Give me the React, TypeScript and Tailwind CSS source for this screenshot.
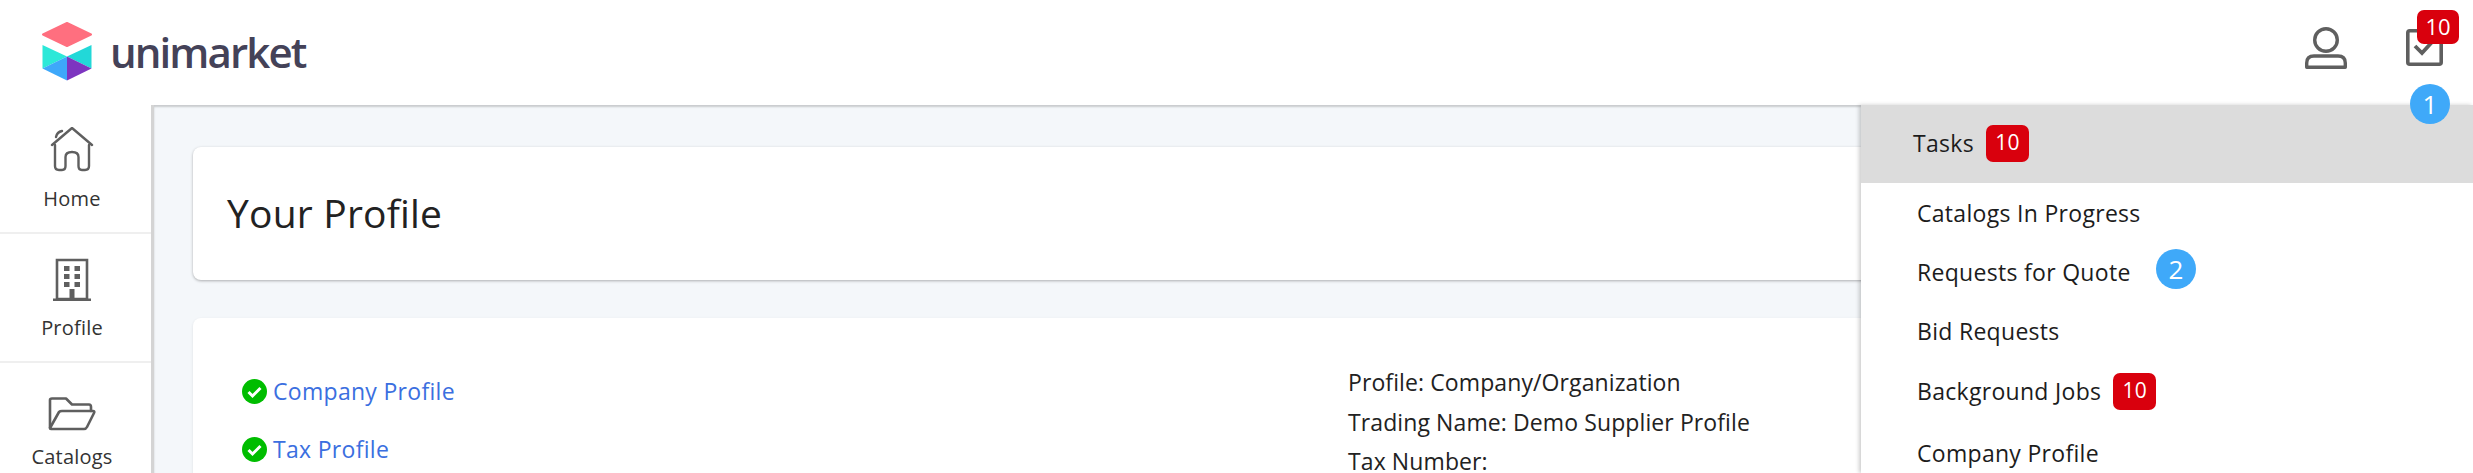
import React from 'react';

const font = { fontFamily: '"Open Sans", "Lato", sans-serif' };

const Logo = () => (
  <div className="flex items-center">
    <svg width="50" height="60" viewBox="0 0 50 60" className="ml-[42px] mt-[-1px]">
      <polygon points="25,1 49,12.5 25,24 1,12.5" fill="#ff6f7f" stroke="#ff6f7f" strokeWidth="2" strokeLinejoin="round" />
      <polygon points="0.5,23 25,34.5 0.5,46.5" fill="#2ce8d8" />
      <polygon points="49.5,23 25,34.5 49.5,46.5" fill="#22d8d8" />
      <polygon points="25,34.5 0.5,46.5 25,58.5" fill="#3ea8fa" />
      <polygon points="25,34.5 49.5,46.5 25,58.5" fill="#7d35c0" />
    </svg>
    <span className="ml-[18px] mt-[-2px] text-[42px] font-semibold leading-none tracking-[-1.9px] text-[#444258]">unimarket</span>
  </div>
);

const Badge = ({ children }: { children: React.ReactNode }) => (
  <span className="inline-flex h-[37px] w-[43px] items-center justify-center rounded-[7px] bg-[#d9000d] text-[21px] font-normal text-white">
    {children}
  </span>
);

const Step = ({ n, className }: { n: number; className: string }) => (
  <span className={`absolute flex h-10 w-10 items-center justify-center rounded-full bg-[#3fa9f9] text-[26px] text-white ${className}`}>
    {n}
  </span>
);

const HomeIcon = () => (
  <svg width="44" height="46" viewBox="0 0 44 46" fill="none" stroke="#5f5f5f" strokeWidth="2.4" strokeLinecap="round" strokeLinejoin="round">
    <path d="M2 18 L22 1 L42 18" />
    <path d="M6 10 Q7 5 12 4" />
    <path d="M5 18 V39 Q5 43 9 43 H12 Q15.5 43 15.5 39 V30 Q15.5 25 22 25 Q28.5 25 28.5 30 V39 Q28.5 43 32 43 H35 Q39 43 39 39 V18" />
  </svg>
);

const BuildingIcon = () => (
  <svg width="38" height="44" viewBox="0 0 38 44" fill="#5f5f5f">
    <path d="M4 2 H34 V41 H4 Z" fill="none" stroke="#5f5f5f" strokeWidth="2.6" />
    <rect x="0" y="40.5" width="38" height="2.5" />
    <rect x="11" y="8" width="5.5" height="5" />
    <rect x="21.5" y="8" width="5.5" height="5" />
    <rect x="11" y="16" width="5.5" height="5" />
    <rect x="21.5" y="16" width="5.5" height="5" />
    <rect x="11" y="24" width="5.5" height="5" />
    <rect x="21.5" y="24" width="5.5" height="5" />
    <rect x="16.5" y="31" width="5" height="10" />
  </svg>
);

const FolderIcon = () => (
  <svg width="48" height="34" viewBox="0 0 48 34" fill="none" stroke="#5f5f5f" strokeWidth="2.6" strokeLinejoin="round" strokeLinecap="round">
    <path d="M2 31 V3 Q2 1.5 4 1.5 H18 L24 7.5 H41 Q43 7.5 43 10 V14" />
    <path d="M2 31 L11 15 Q12 14 14 14 H45 Q47 14 46 16 L39 30 Q38 32 36 32 H3 Q2 32 2 31 Z" />
  </svg>
);

const NavItem = ({ label, icon, height, last }: { label: string; icon: React.ReactNode; height: string; last?: boolean }) => (
  <div className={`flex flex-col items-center pr-[7px] ${height} ${last ? '' : 'border-b-2 border-[#efefef]'}`}>
    <div className="flex h-[68px] items-end">{icon}</div>
    <span className="mt-[14px] text-[20px] leading-[24px] tracking-[0.2px] text-[#333]">{label}</span>
  </div>
);

const Check = () => (
  <svg width="25" height="25" viewBox="0 0 25 25" className="shrink-0">
    <circle cx="12.5" cy="12.5" r="12.5" fill="#00bd00" />
    <path d="M6.5 13 L10.5 17 L18.5 9" fill="none" stroke="#fff" strokeWidth="3" />
  </svg>
);

const MenuRow = ({ label, badge, height }: { label: string; badge?: boolean; height: string }) => (
  <div className={`flex items-center gap-[12px] pl-[56px] ${height} text-[23px] font-medium tracking-[0.3px] text-[#1c1c1c]`}>
    <span>{label}</span>
    {badge && <Badge>10</Badge>}
  </div>
);

export default function App() {
  return (
    <div className="relative h-[473px] w-full overflow-hidden bg-white" style={font}>
      <header className="flex h-[105px] items-center justify-between bg-white">
        <Logo />
        <div className="relative mb-[12px] mr-[30px] flex items-center gap-[59px] pt-[2px]">
          <svg width="42" height="42" viewBox="0 0 42 42" fill="none" stroke="#5f5f5f" strokeWidth="3.4">
            <circle cx="21" cy="13" r="11.3" />
            <path d="M1.7 40.3 V36 Q1.7 29 9 29 H33 Q40.3 29 40.3 36 V40.3 Z" strokeLinejoin="round" />
          </svg>
          <svg width="37" height="37" viewBox="0 0 37 37" fill="none" stroke="#5f5f5f" strokeWidth="3.6">
            <rect x="1.8" y="1.8" width="33.4" height="33.4" rx="2" />
            <path d="M9 17 L16 24 L27 12" strokeWidth="3.8" />
          </svg>
          <span className="absolute left-[112px] top-[-15px] flex h-[34px] w-[42px] items-center justify-center rounded-[7px] bg-[#d9000d] text-[22px] text-white">10</span>
        </div>
      </header>

      <div className="flex h-[368px]">
        <nav className="w-[154px] shrink-0 border-r-[3px] border-[#d4d4d4] bg-white">
          <NavItem label="Home" icon={<HomeIcon />} height="h-[129px]" />
          <NavItem label="Profile" icon={<BuildingIcon />} height="h-[129px]" />
          <NavItem label="Catalogs" icon={<FolderIcon />} height="h-[110px]" last />
        </nav>
        <main className="flex-1 bg-[#f4f7fa] pl-[39px] pr-[40px] pt-[42px] shadow-[inset_0_2px_2px_rgba(0,0,0,0.18)]">
          <div className="flex h-[133px] items-center rounded-lg bg-white pl-[34px] shadow-[0_1px_3px_rgba(0,0,0,0.3)]">
            <h1 className="text-[39px] font-normal tracking-[0.2px] text-[#222]">Your Profile</h1>
          </div>
          <div className="mt-[38px] grid h-[300px] grid-cols-[1106px_1fr] rounded-lg bg-white pl-[49px] pt-[61px] shadow-[0_1px_3px_rgba(0,0,0,0.1)]">
            <div className="flex flex-col gap-[33px]">
              <a className="flex items-center gap-[6px] text-[23px] leading-[25px] tracking-[0.3px] text-[#3b6fe0]"><Check />Company Profile</a>
              <a className="flex items-center gap-[6px] text-[23px] leading-[25px] tracking-[0.3px] text-[#3b6fe0]"><Check />Tax Profile</a>
            </div>
            <div className="mt-[-16px] text-[23px] leading-[39.5px] tracking-[0.1px] text-[#222]">
              <p>Profile: Company/Organization</p>
              <p>Trading Name: Demo Supplier Profile</p>
              <p>Tax Number:</p>
            </div>
          </div>
        </main>
      </div>

      <aside className="absolute bottom-0 left-[1861px] right-0 top-[105px] bg-white shadow-[-2px_0_4px_rgba(0,0,0,0.2)]">
        <div className="flex h-[78px] items-center gap-[12px] bg-[#dcdcdc] pb-[2px] pl-[52px] text-[23px] font-medium tracking-[0.3px] text-[#1c1c1c]">
          <span>Tasks</span>
          <Badge>10</Badge>
        </div>
        <div>
          <MenuRow label="Catalogs In Progress" height="h-[60px]" />
          <MenuRow label="Requests for Quote" height="h-[58px]" />
          <MenuRow label="Bid Requests" height="h-[60px]" />
          <MenuRow label="Background Jobs" badge height="h-[60px]" />
          <MenuRow label="Company Profile" height="h-[64px]" />
        </div>
      </aside>

      <Step n={1} className="left-[2410px] top-[84px]" />
      <Step n={2} className="left-[2156px] top-[249px]" />
    </div>
  );
}
